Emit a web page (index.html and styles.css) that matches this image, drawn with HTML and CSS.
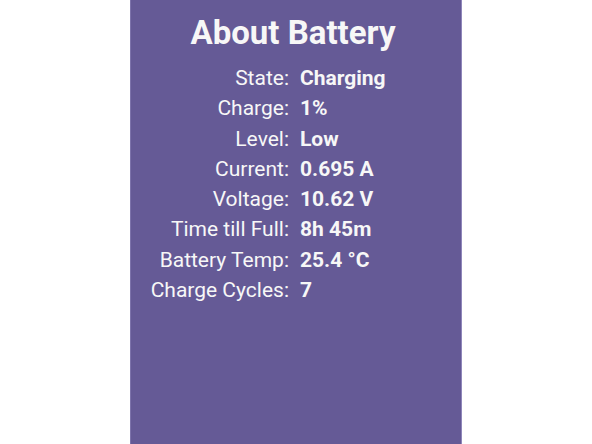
FILE: index.html
```html
<!DOCTYPE html>
<html>
<head>
<meta charset="utf-8">
<link rel="stylesheet" href="styles.css">
</head>
<body>
<div class="page">
  <div class="panel">
    <h1 class="title">About Battery</h1>
    <div class="info">
      <div class="label">State:</div><div class="value">Charging</div>
      <div class="label">Charge:</div><div class="value">1%</div>
      <div class="label">Level:</div><div class="value">Low</div>
      <div class="label">Current:</div><div class="value">0.695 A</div>
      <div class="label">Voltage:</div><div class="value">10.62 V</div>
      <div class="label">Time till Full:</div><div class="value">8h 45m</div>
      <div class="label">Battery Temp:</div><div class="value">25.4 °C</div>
      <div class="label">Charge Cycles:</div><div class="value">7</div>
    </div>
  </div>
</div>
</body>
</html>
```
FILE: styles.css
```css
html, body {
  margin: 0;
  padding: 0;
  background: #ffffff;
}
.page {
  width: 592px;
  height: 444px;
  display: flex;
  justify-content: flex-start;
}
.panel {
  margin-left: 130px;
  width: 332px;
  height: 444px;
  box-sizing: border-box;
  background: #655a96;
  border-left: 1px solid #7d73ab;
  border-right: 1px solid #8f86ba;
  color: #f7f7f7;
  font-family: Roboto, "Liberation Sans", sans-serif;
}
.title {
  margin: 0;
  padding-top: 13px;
  font-size: 33px;
  font-weight: bold;
  line-height: 40px;
  text-align: center;
  padding-right: 6px;
}
.info {
  margin-top: 10px;
  display: grid;
  grid-template-columns: 158px 1fr;
  column-gap: 11px;
  font-size: 21px;
  line-height: 30.3px;
}
.label {
  text-align: right;
}
.value {
  font-weight: bold;
}
```
